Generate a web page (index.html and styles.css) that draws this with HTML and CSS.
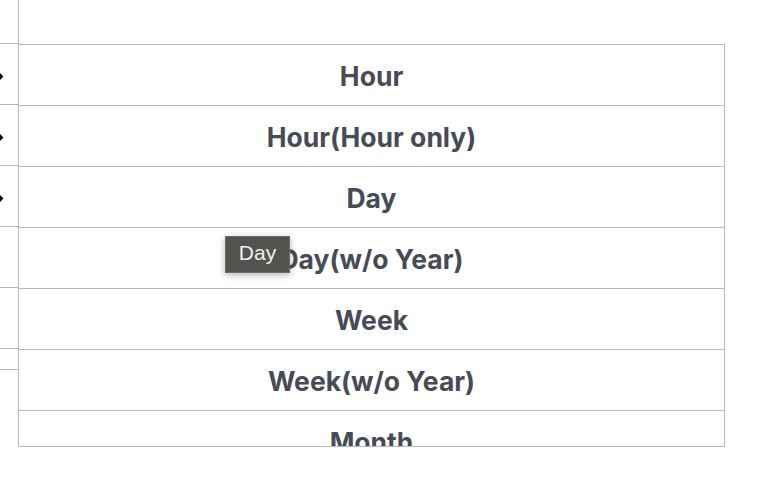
FILE: index.html
```html
<!DOCTYPE html>
<html>
<head>
<meta charset="utf-8">
<link rel="stylesheet" href="styles.css">
</head>
<body>
<div class="page">
  <div class="side">
    <div class="side-head"></div>
    <div class="side-row"><span class="arrow"></span></div>
    <div class="side-row"><span class="arrow"></span></div>
    <div class="side-row"><span class="arrow"></span></div>
    <div class="side-row"></div>
    <div class="side-row"></div>
    <div class="side-row short"></div>
    <div class="side-rest"></div>
  </div>
  <div class="popup">
    <div class="item">Hour</div>
    <div class="item">Hour(Hour only)</div>
    <div class="item">Day</div>
    <div class="item">Day(w/o Year)</div>
    <div class="item">Week</div>
    <div class="item">Week(w/o Year)</div>
    <div class="item">Month</div>
  </div>
  <div class="tooltip">Day</div>
</div>
</body>
</html>
```
FILE: styles.css
```css
html, body {
  margin: 0;
  padding: 0;
  background: #ffffff;
}
.page {
  position: relative;
  width: 770px;
  height: 478px;
  overflow: hidden;
}
.side {
  width: 18px;
  height: 447px;
  border-right: 1px solid #b8b8b8;
  display: flex;
  flex-direction: column;
}
.side-head {
  height: 43px;
  border-bottom: 1px solid #b8b8b8;
  flex: none;
}
.side-row {
  height: 60px;
  border-bottom: 1px solid #b8b8b8;
  position: relative;
  flex: none;
}
.side-row.short {
  height: 20px;
}
.side-rest {
  flex: 1;
}
.arrow {
  position: absolute;
  left: -5px;
  top: 29px;
  width: 7px;
  height: 7px;
  background: #000;
  transform: rotate(45deg);
}
.popup {
  position: absolute;
  left: 18px;
  top: 44px;
  width: 705px;
  height: 401px;
  border: 1px solid #b8b8b8;
  background: #fff;
  overflow: hidden;
}
.item {
  height: 60px;
  border-bottom: 1px solid #b8b8b8;
  display: flex;
  align-items: center;
  justify-content: center;
  padding-top: 2px;
  box-sizing: border-box;
  height: 61px;
  font-family: Inter, "Liberation Sans", sans-serif;
  font-weight: 700;
  font-size: 26.5px;
  color: #474b55;
}
.tooltip {
  position: absolute;
  left: 225px;
  top: 236px;
  width: 65px;
  height: 37px;
  background: #52524f;
  border: 1px solid #6b6b68;
  box-shadow: 0 2px 7px rgba(0, 0, 0, 0.3);
  color: #f0f0f0;
  font-family: "Liberation Sans", Arial, sans-serif;
  font-size: 21px;
  display: flex;
  align-items: center;
  justify-content: center;
  padding-bottom: 4px;
  box-sizing: border-box;
}
```
